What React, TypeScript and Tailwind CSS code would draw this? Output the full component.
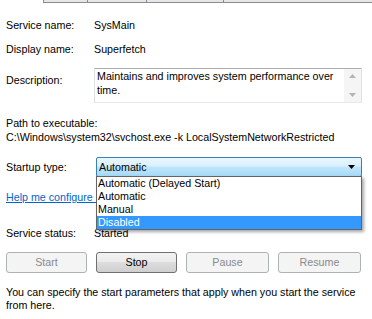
import React from 'react';

function Tabs() {
  return (
    <div className="flex h-[3px]">
      <div className="w-[43px]" />
      <div className="w-[44px] border-l border-b border-[#898c95] bg-[#e6e6e6]" />
      <div className="w-[59px] border-l border-b border-[#898c95] bg-[#e6e6e6]" />
      <div className="w-[77px] border-l border-b border-[#898c95] bg-[#e6e6e6]" />
      <div className="flex-1 border-l border-b border-[#898c95] bg-[#e6e6e6]" />
    </div>
  );
}

function Row({ label, value }: { label: string; value: string }) {
  return (
    <div className="flex leading-[14px]">
      <div className="w-[88px]">{label}</div>
      <div>{value}</div>
    </div>
  );
}

function Button({ label, enabled, w }: { label: string; enabled?: boolean; w: string }) {
  return enabled ? (
    <div
      className={`${w} h-[21px] flex items-center justify-center rounded-[3px] border border-[#707070] bg-[linear-gradient(#f2f2f2_0%,#ebebeb_45%,#dddddd_50%,#cfcfcf_100%)] text-black`}
    >
      {label}
    </div>
  ) : (
    <div
      className={`${w} h-[21px] flex items-center justify-center rounded-[3px] border border-[#adb2b5] bg-[#f4f4f4] text-[#8a8a8a]`}
    >
      {label}
    </div>
  );
}

export default function App() {
  const options = ['Automatic (Delayed Start)', 'Automatic', 'Manual', 'Disabled'];

  return (
    <div className="relative w-[372px] h-[319px] overflow-hidden bg-white text-black font-['Liberation_Sans',Arial,sans-serif] text-[10.7px]">
      <Tabs />

      <div className="pl-[6px] pr-[10px]">
        <div className="mt-[15px]">
          <Row label="Service name:" value="SysMain" />
        </div>
        <div className="mt-[10px]">
          <Row label="Display name:" value="Superfetch" />
        </div>

        <div className="mt-[12px] flex">
          <div className="w-[88px] pt-[5px] leading-[14px]">Description:</div>
          <div className="flex h-[35px] w-[268px] border border-[#abadb3] border-l-[#dbdfe6] border-r-[#dbdfe6] border-b-[#e3e9ef]">
            <div className="flex-1 pl-[2px] leading-[14px]">
              Maintains and improves system performance over
              <br />
              time.
            </div>
            <div className="w-[17px] flex flex-col items-center justify-between bg-[#f5f5f5] py-[5px]">
              <svg width="7" height="4" viewBox="0 0 7 4">
                <path d="M0 4 L3.5 0 L7 4 Z" fill="#b4b4b4" />
              </svg>
              <svg width="7" height="4" viewBox="0 0 7 4">
                <path d="M0 0 L3.5 4 L7 0 Z" fill="#b4b4b4" />
              </svg>
            </div>
          </div>
        </div>

        <div className="mt-[13px] leading-[14px]">
          <div>Path to executable:</div>
          <div>C:\Windows\system32\svchost.exe -k LocalSystemNetworkRestricted</div>
        </div>

        <div className="mt-[13px] flex items-center h-[20px]">
          <div className="w-[90px] leading-[14px]">Startup type:</div>
          <div className="flex items-center h-[20px] w-[266px] rounded-[2px] border border-[#3c7fb1] bg-[linear-gradient(#eaf6fd_0%,#d9f0fc_45%,#bee6fd_50%,#a7d9f5_100%)] pl-[2px] pr-[6px]">
            <div className="flex-1 leading-[14px]">Automatic</div>
            <svg width="7" height="4" viewBox="0 0 7 4">
              <path d="M0 0 L7 0 L3.5 4 Z" fill="#000" />
            </svg>
          </div>
        </div>

        <div className="mt-[13px] leading-[14px] w-[90px] overflow-hidden whitespace-nowrap">
          <span className="text-[#0066cc] underline">Help me configure service startup options.</span>
        </div>

        <div className="mt-[9px] h-px bg-[#a0a0a0] border-b border-white" />

        <div className="mt-[12px]">
          <Row label="Service status:" value="Started" />
        </div>

        <div className="mt-[12px] flex gap-[9px]">
          <Button label="Start" w="w-[81px]" />
          <Button label="Stop" w="w-[81px]" enabled />
          <Button label="Pause" w="w-[83px]" />
          <Button label="Resume" w="w-[83px]" />
        </div>

        <div className="mt-[13px] leading-[13px]">
          You can specify the start parameters that apply when you start the service
          <br />
          from here.
        </div>
      </div>

      <div className="absolute left-[96px] top-[176px] w-[266px] border border-[#646464] bg-white shadow-[2px_2px_3px_rgba(0,0,0,0.35)]">
        {options.map((o) => (
          <div
            key={o}
            className={
              o === 'Disabled'
                ? 'h-[13px] leading-[13px] pl-[1px] bg-[#3399ff] text-white'
                : 'h-[13px] leading-[13px] pl-[1px]'
            }
          >
            {o}
          </div>
        ))}
      </div>
    </div>
  );
}
